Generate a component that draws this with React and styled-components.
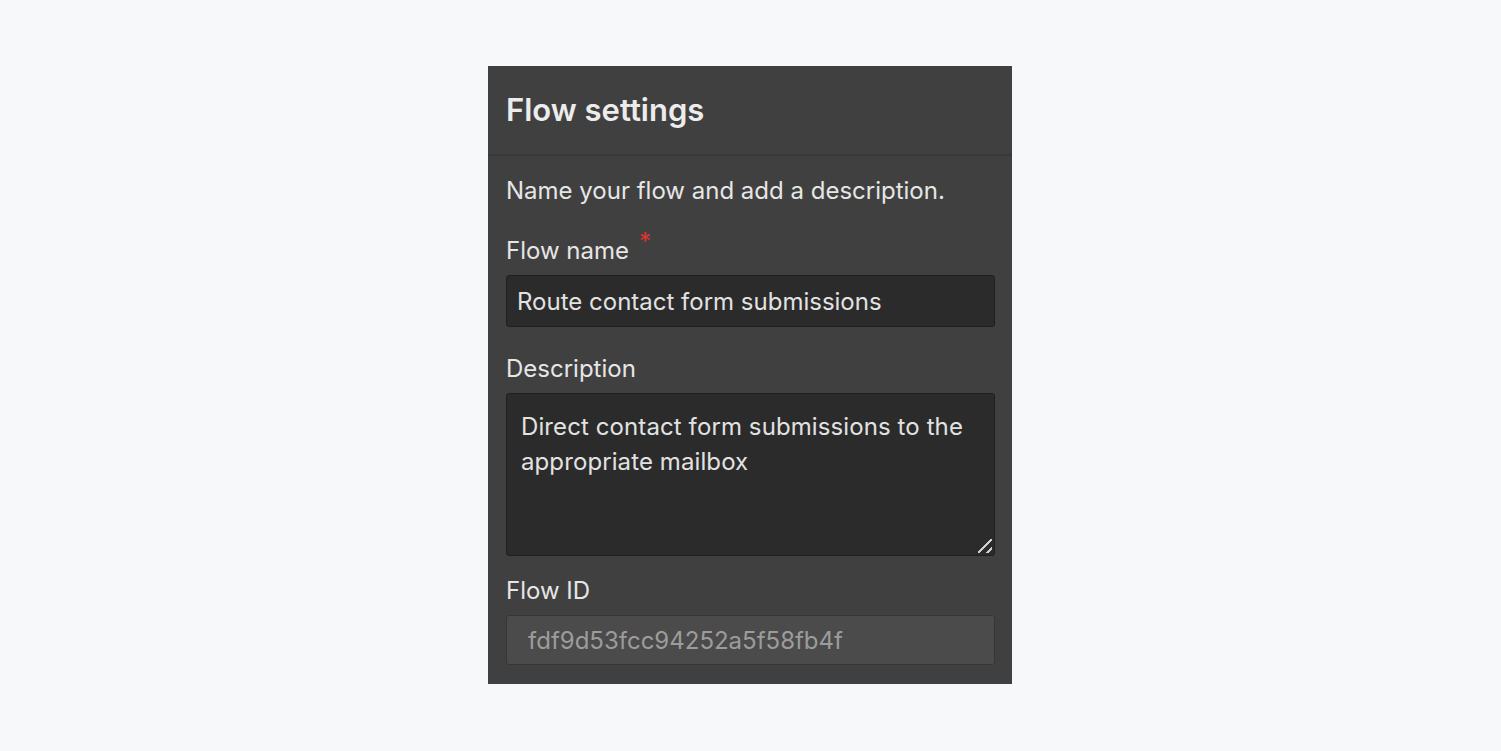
import styled, { createGlobalStyle } from "styled-components";

const GlobalStyle = createGlobalStyle`
    html, body {
        margin: 0;
        padding: 0;
        background-color: #f7f8f9;
        font-family: 'Inter', 'Noto Sans', sans-serif;
    }
`;

const Page = styled.div`
    width: 1501px;
    height: 751px;
    display: flex;
    justify-content: center;
    align-items: flex-start;
    padding-top: 66px;
    box-sizing: border-box;
`;

const Panel = styled.section`
    width: 524px;
    height: 618px;
    background-color: #404040;
    color: #e8e8e8;
    margin-left: -1px;
    box-sizing: border-box;
`;

const Header = styled.header`
    height: 90px;
    border-bottom: 2px solid #393939;
    display: flex;
    align-items: center;
    padding: 0 18px 2px;
    box-sizing: border-box;

    h1 {
        margin: 0;
        font-size: 31px;
        font-weight: 600;
        color: #ececec;
    }
`;

const Body = styled.div`
    padding: 20px 17px 19px 18px;
    display: flex;
    flex-direction: column;
`;

const Intro = styled.p`
    margin: 0 0 29px;
    font-size: 24px;
    line-height: 30px;
    color: #e6e6e6;
`;

const Label = styled.label`
    display: block;
    font-size: 24px;
    line-height: 32px;
    color: #e6e6e6;
    margin-bottom: 8px;

    span {
        color: #e0332f;
        font-size: 24px;
        position: relative;
        top: -9px;
        margin-left: 10px;
    }
`;

const Input = styled.input`
    display: block;
    width: 100%;
    height: ${(p) => (p.$readOnly ? 50 : 52)}px;
    box-sizing: border-box;
    border-radius: 3px;
    border: 1px solid ${(p) => (p.$readOnly ? "#363636" : "#1f1f1f")};
    background-color: ${(p) => (p.$readOnly ? "#4b4b4b" : "#2b2b2b")};
    color: ${(p) => (p.$readOnly ? "#9c9c9c" : "#e2e2e2")};
    font-family: 'Inter', 'Noto Sans', sans-serif;
    font-size: 24px;
    padding: 0 0 0 ${(p) => (p.$readOnly ? 21 : 10)}px;
    margin-bottom: ${(p) => p.$after || 0}px;
    outline: none;
`;

const AreaWrap = styled.div`
    position: relative;
    margin-bottom: 19px;
`;

const TextArea = styled.textarea`
    display: block;
    width: 100%;
    height: 163px;
    box-sizing: border-box;
    border-radius: 3px;
    border: 1px solid #1f1f1f;
    background-color: #2b2b2b;
    color: #e2e2e2;
    font-family: 'Inter', 'Noto Sans', sans-serif;
    font-size: 24px;
    line-height: 35px;
    letter-spacing: 0.1px;
    padding: 15px 14px;
    resize: none;
    outline: none;
`;

const Grip = styled.i`
    position: absolute;
    right: 3px;
    bottom: 3px;
    width: 14px;
    height: 14px;
    pointer-events: none;
    background:
        linear-gradient(135deg, transparent 45%, #cfcfcf 45%, #cfcfcf 54%, transparent 54%),
        linear-gradient(135deg, transparent 78%, #cfcfcf 78%, #cfcfcf 88%, transparent 88%);
`;

const App = () => {
    return (
        <>
            <GlobalStyle />
            <Page>
                <Panel>
                    <Header>
                        <h1>Flow settings</h1>
                    </Header>
                    <Body>
                        <Intro>Name your flow and add a description.</Intro>
                        <Label>Flow name<span>*</span></Label>
                        <Input defaultValue="Route contact form submissions" $after={26} />
                        <Label>Description</Label>
                        <AreaWrap>
                            <TextArea defaultValue="Direct contact form submissions to the appropriate mailbox" />
                            <Grip />
                        </AreaWrap>
                        <Label>Flow ID</Label>
                        <Input readOnly $readOnly value="fdf9d53fcc94252a5f58fb4f" />
                    </Body>
                </Panel>
            </Page>
        </>
    );
};

export default App;
